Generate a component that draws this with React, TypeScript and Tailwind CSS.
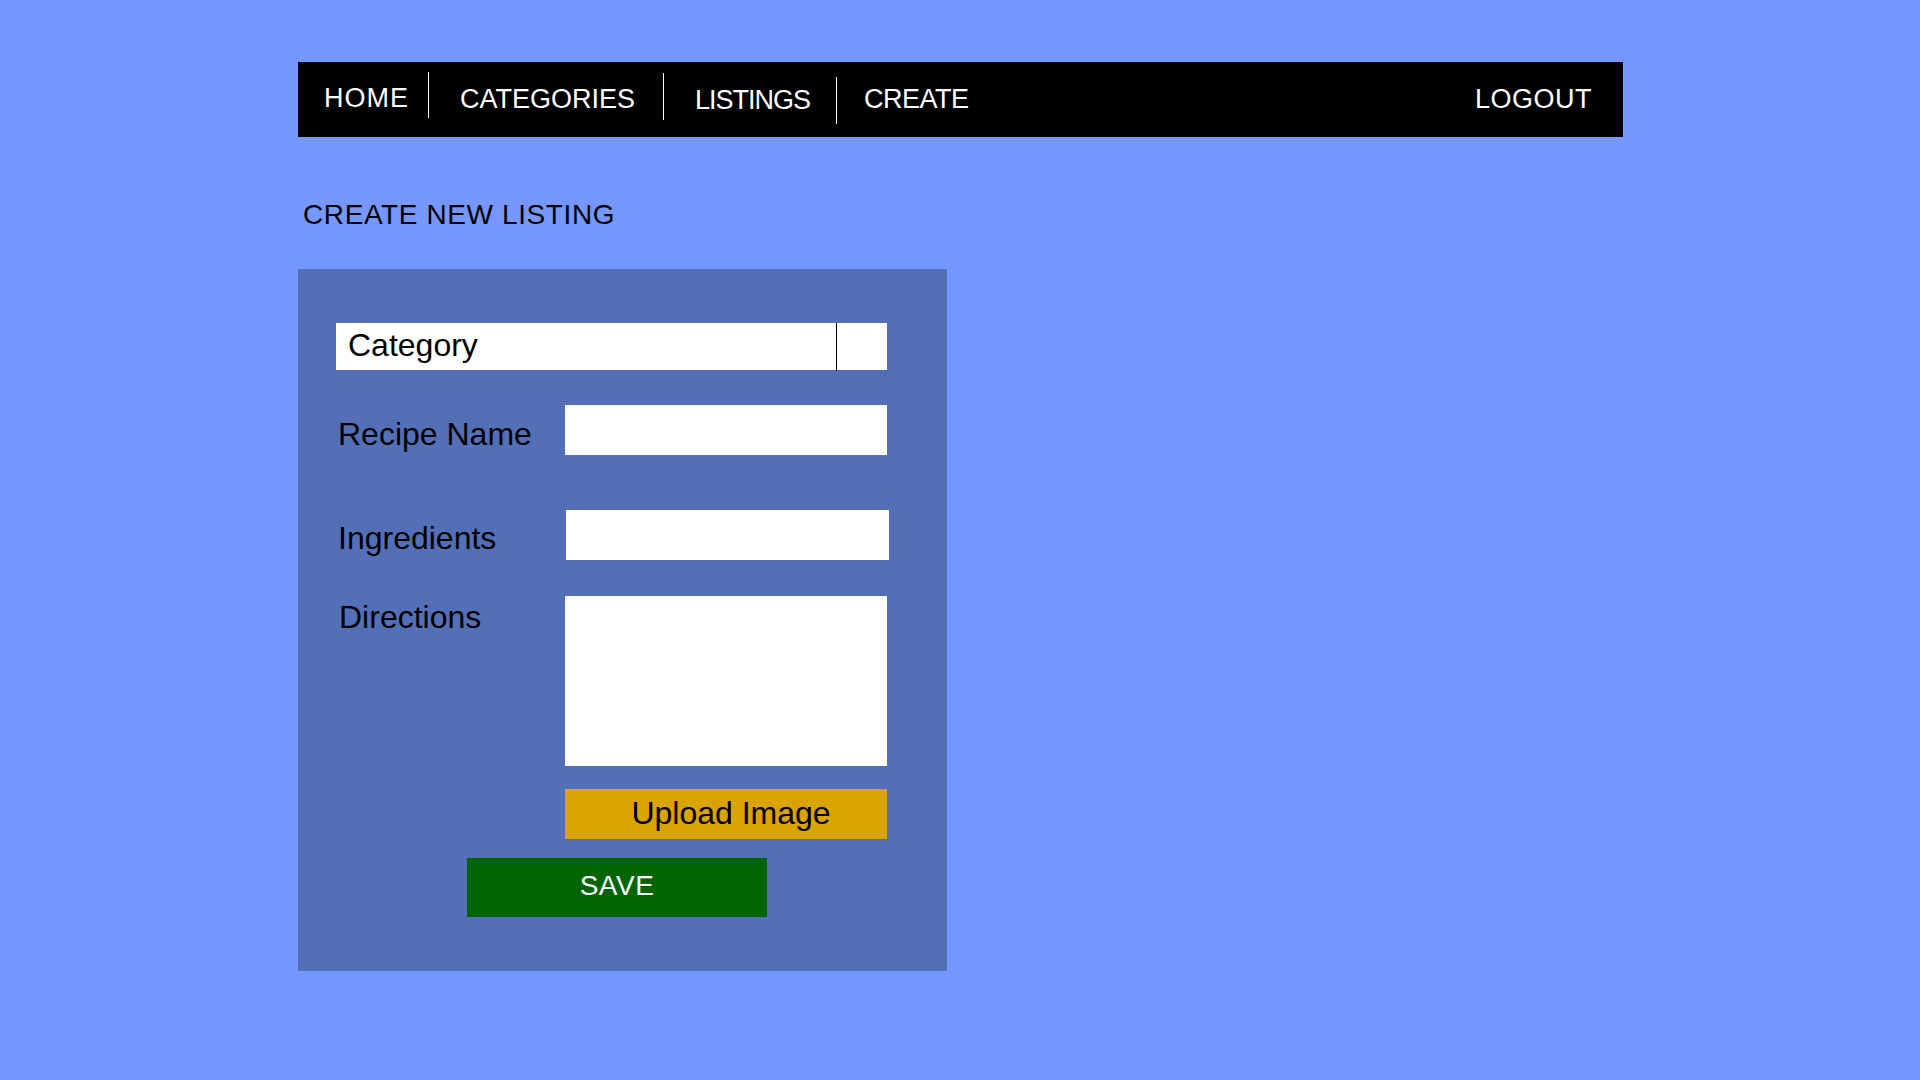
function Sep({ className }: { className: string }) {
  return <div className={"w-px self-start bg-white " + className} />;
}

export default function App() {
  return (
    <div className="min-h-screen bg-[#7597fe] pl-[298px] pt-[62px] font-['Liberation_Sans',Arial,sans-serif]">
      <nav className="flex h-[75px] w-[1325px] items-center bg-black pl-[26px] text-[27px] leading-none text-white">
        <span className="w-[104px] pb-[2px] tracking-[1px]">HOME</span>
        <Sep className="mt-[10px] h-[46px]" />
        <span className="ml-[31px] w-[203px] pb-[1px]">CATEGORIES</span>
        <Sep className="mt-[11px] h-[47px]" />
        <span className="ml-[31px] w-[141px] pt-[1px] tracking-[-1px]">LISTINGS</span>
        <Sep className="mt-[15px] h-[47px]" />
        <span className="ml-[27px] pb-[1px] tracking-[-0.5px]">CREATE</span>
        <span className="ml-auto mr-[31px] pb-[1px] tracking-[0.5px]">LOGOUT</span>
      </nav>

      <h1 className="ml-[5px] mt-[64px] text-[28px] font-normal leading-none tracking-[0.6px] text-black">
        CREATE NEW LISTING
      </h1>

      <form className="mt-[40px] flex h-[702px] w-[649px] flex-col bg-[#536fb8] pl-[38px] pt-[54px] text-[32px] leading-none text-black">
        <div className="flex h-[47px] w-[551px] items-center bg-white">
          <span className="flex-1 pb-[3px] pl-[12px]">Category</span>
          <div className="h-[48px] w-[51px] self-start border-l border-black" />
        </div>

        <div className="mt-[35px] flex items-center">
          <label className="w-[229px] pl-[2px] pt-[8px]">Recipe Name</label>
          <input className="h-[50px] w-[322px] bg-white outline-none" />
        </div>

        <div className="mt-[55px] flex items-center">
          <label className="w-[229px] pl-[2px] pt-[6px]">Ingredients</label>
          <input className="ml-[1px] h-[50px] w-[323px] bg-white outline-none" />
        </div>

        <div className="mt-[36px] flex items-start">
          <label className="w-[229px] pl-[3px] pt-[5px]">Directions</label>
          <textarea className="h-[170px] w-[322px] resize-none bg-white outline-none" />
        </div>

        <div className="mt-[23px] flex">
          <button
            type="button"
            className="ml-[229px] h-[50px] w-[322px] bg-[#d9a300] pb-[2px] pl-[10px] text-[32px] leading-none text-black"
          >
            Upload Image
          </button>
        </div>

        <button
          type="button"
          className="ml-[131px] mt-[19px] h-[59px] w-[300px] bg-[#006400] pb-[3px] text-[28px] leading-none tracking-[0.5px] text-white"
        >
          SAVE
        </button>
      </form>
    </div>
  );
}
